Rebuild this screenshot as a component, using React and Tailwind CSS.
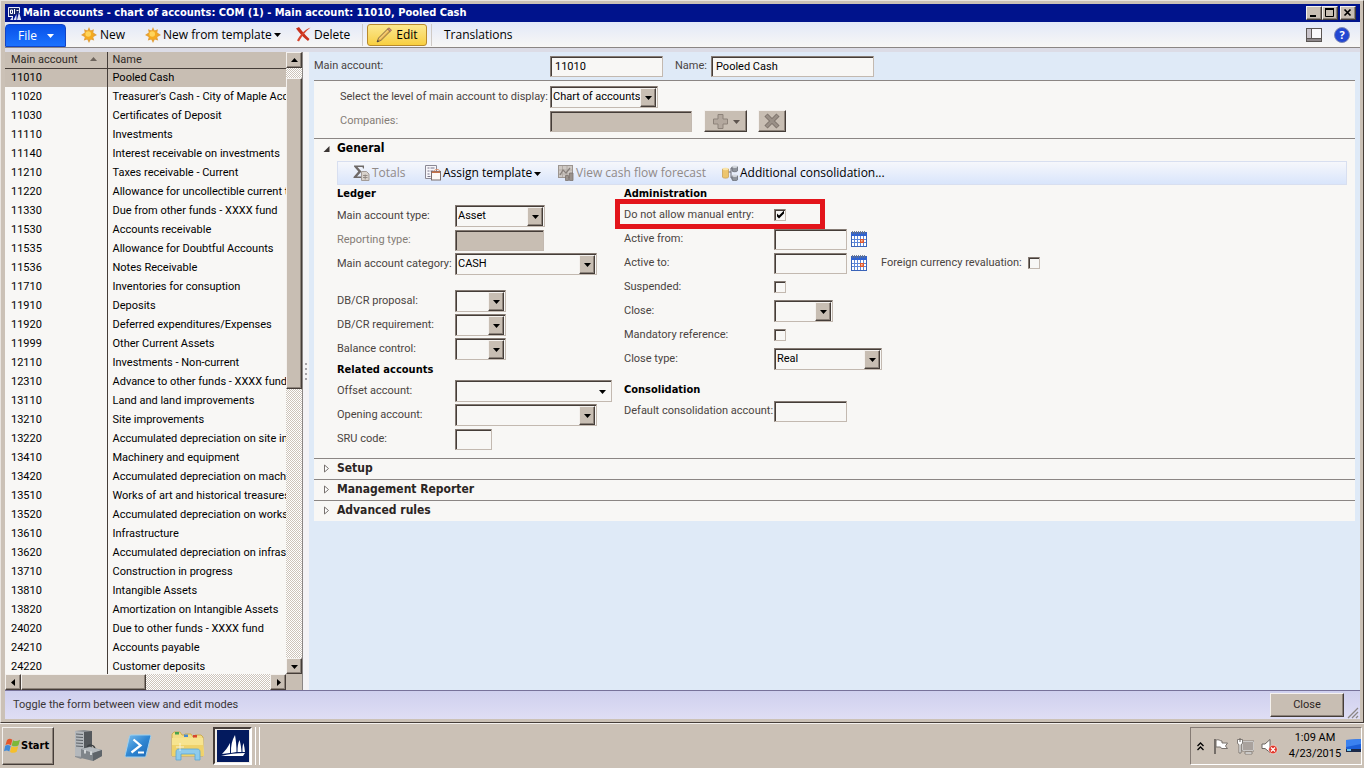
import { useState } from 'react';

const accounts = [
  ['11010', 'Pooled Cash'],
  ['11020', "Treasurer's Cash - City of Maple Acc"],
  ['11030', 'Certificates of Deposit'],
  ['11110', 'Investments'],
  ['11140', 'Interest receivable on investments'],
  ['11210', 'Taxes receivable - Current'],
  ['11220', 'Allowance for uncollectible current ta'],
  ['11330', 'Due from other funds - XXXX fund'],
  ['11530', 'Accounts receivable'],
  ['11535', 'Allowance for Doubtful Accounts'],
  ['11536', 'Notes Receivable'],
  ['11710', 'Inventories for consuption'],
  ['11910', 'Deposits'],
  ['11920', 'Deferred expenditures/Expenses'],
  ['11999', 'Other Current Assets'],
  ['12110', 'Investments - Non-current'],
  ['12310', 'Advance to other funds - XXXX fund'],
  ['13110', 'Land and land improvements'],
  ['13210', 'Site improvements'],
  ['13220', 'Accumulated depreciation on site imp'],
  ['13410', 'Machinery and equipment'],
  ['13420', 'Accumulated depreciation on machin'],
  ['13510', 'Works of art and historical treasures'],
  ['13520', 'Accumulated depreciation on works'],
  ['13610', 'Infrastructure'],
  ['13620', 'Accumulated depreciation on infrast'],
  ['13710', 'Construction in progress'],
  ['13810', 'Intangible Assets'],
  ['13820', 'Amortization on Intangible Assets'],
  ['24020', 'Due to other funds - XXXX fund'],
  ['24210', 'Accounts payable'],
  ['24220', 'Customer deposits'],
];

const raised =
  'bg-[#c8beb3] border border-t-[#f4f1ee] border-l-[#f4f1ee] border-r-[#453d38] border-b-[#453d38] shadow-[inset_-1px_-1px_0_#8d837a]';
const sunken =
  'bg-[#f8f7f5] border border-t-[#857b74] border-l-[#857b74] border-r-[#c3b9b0] border-b-[#c3b9b0] shadow-[inset_1px_1px_0_#453d38]';
const dither = 'bg-[repeating-conic-gradient(#ffffff_0_25%,#cdc4ba_0_50%)] bg-size-[2px_2px]';
const boldFont = "font-['DejaVu_Sans_Condensed','DejaVu_Sans',sans-serif] font-bold";
const barFont = "font-['Open_Sans','Noto_Sans',sans-serif] text-[12px]";

function Arrow({ dir = 'down', className = '' }) {
  const points = {
    down: '0,2 7,2 3.5,6',
    up: '0,5 7,5 3.5,1',
    left: '5,0 5,7 1,3.5',
    right: '2,0 2,7 6,3.5',
  };
  return (
    <svg width="7" height="7" viewBox="0 0 7 7" className={`shrink-0 ${className}`} aria-hidden="true">
      <polygon points={points[dir]} fill="currentColor" />
    </svg>
  );
}

function Combo({ id, width, value = '', flat = false }) {
  return (
    <div className={`relative ${width}`}>
      <select
        id={id}
        defaultValue={value}
        className={`block w-full h-[22px] pl-0.5 appearance-none outline-none text-black ${sunken}`}
      >
        <option value={value}>{value}</option>
      </select>
      <span
        className={`absolute right-0.5 top-0.5 bottom-px w-4 flex items-center justify-center pointer-events-none text-black ${flat ? '' : raised}`}
      >
        <Arrow />
      </span>
    </div>
  );
}

function TextBox({ id, width, value = '', disabled = false }) {
  return (
    <input
      id={id}
      type="text"
      defaultValue={value}
      disabled={disabled}
      className={`h-[21px] px-1 outline-none text-black ${width} ${sunken} disabled:bg-[#c8beb3]`}
    />
  );
}

function Check({ id, checked = false }) {
  return (
    <span className="relative flex">
      <input
        id={id}
        type="checkbox"
        defaultChecked={checked}
        className={`peer appearance-none w-3 h-3 ${sunken}`}
      />
      <svg
        viewBox="0 0 12 12"
        className="absolute inset-0 w-3 h-3 pointer-events-none hidden peer-checked:block"
        aria-hidden="true"
      >
        <path d="M3 4.5v3l2 2 5-5v-3l-5 5z" fill="#000" />
      </svg>
    </span>
  );
}

function Row({ label, id, labelWidth, muted, children }) {
  return (
    <div className="relative h-6 flex items-center">
      <label htmlFor={id} className={`shrink-0 whitespace-nowrap ${labelWidth} ${muted ? 'text-[#857d77]' : ''}`}>
        {label}
      </label>
      {children}
    </div>
  );
}

function LedgerRow(props) {
  return <Row labelWidth="w-[118px]" {...props} />;
}

function AdminRow(props) {
  return <Row labelWidth="w-[150px]" {...props} />;
}

function StarIcon() {
  return (
    <svg width="16" height="16" viewBox="0 0 16 16" aria-hidden="true">
      <path
        d="M8 0l1.500 3.500L13 2.200l-.800 3.300L16 8l-3.800 2 1 3.500-3.500-1L8 16l-1.700-3.500-3.500 1 1-3.500L0 8l3.800-2.500L3 2.200l3.500 1.300z"
        fill="#e3a03a"
      />
      <circle cx="8" cy="8" r="4.600" fill="#f5aa1f" />
      <circle cx="7.200" cy="7" r="2.800" fill="#ffd45a" />
    </svg>
  );
}

function DeleteIcon() {
  return (
    <svg width="15" height="15" viewBox="0 0 15 15" fill="none" aria-hidden="true">
      <path d="M0 1.500L3 0c3 4 6 8 10.500 12l-1.500 2C8 11 4 7 0 1.500z" fill="#c8301c" />
      <path d="M14.500 0.500C9 5 6 9 3 14.500L1 13.500C4 8 8 3 14.500 0.500z" fill="#d8452e" />
    </svg>
  );
}

function PencilIcon() {
  return (
    <svg width="16" height="16" viewBox="0 0 16 16" aria-hidden="true">
      <path d="M1 15l1.5-4L11.5 2l2.6 2.4L5 13.4z" fill="#e9b24a" stroke="#7d6a4a" strokeWidth="0.9" />
      <path d="M3.500 12L12.500 3" stroke="#fbe3a0" strokeWidth="0.9" />
      <path d="M11.5 2L13 .8l2.5 2.4-1.4 1.3z" fill="#d98a74" stroke="#7d5a4a" strokeWidth="0.7" />
      <path d="M1 15l.8-2 1.4 1.3z" fill="#333" />
    </svg>
  );
}

function CalendarIcon() {
  return (
    <svg width="16" height="16" viewBox="0 0 16 16" aria-hidden="true">
      <rect x="0.5" y="1.5" width="15" height="14" fill="#fff" stroke="#3a63b8" />
      <rect x="0" y="2" width="16" height="3" fill="#2f62d0" />
      <path d="M1.5 0v3M3.5 0v3M5.5 0v3M7.5 0v3M9.5 0v3M11.5 0v3M13.5 0v3" stroke="#66748c" strokeWidth="0.9" />
      <path d="M3.5 5v10M6.5 5v10M9.5 5v10M12.5 5v10M1 8.5h14M1 11.5h14" stroke="#5d86d6" strokeWidth="1" />
      <rect x="9" y="8" width="4" height="4" fill="#e0582e" />
      <rect x="10" y="9" width="1.6" height="1.6" fill="#ffc2a0" />
    </svg>
  );
}

function SumIcon() {
  return (
    <svg width="17" height="16" viewBox="0 0 17 16" aria-hidden="true">
      <path d="M1 .5h10v3h-1L9.500 2H4.500l4 4.500-4.500 5h5V13H0.500v-1l4.800-5.400L1 1.500z" fill="#6f6a68" />
      <path d="M8.500 6.500h5l2.500 2.500v6.500H8.500z" fill="#d8d2cc" stroke="#a39b96" />
      <path d="M10 10.500h4.500M10 12.500h4.500M12.200 9.500v5" stroke="#8d8580" strokeWidth="0.9" />
    </svg>
  );
}

function TemplateIcon() {
  return (
    <svg width="16" height="16" viewBox="0 0 16 16" aria-hidden="true">
      <path d="M.5.5h11v13H.5z" fill="#f7f6fa" stroke="#8a8894" />
      <path d="M2.500 3h2M2.500 6h2M2.500 9h2M5.500 3h4M5.500 6h3M2.500 11.500h3" stroke="#77758a" />
      <rect x="6.500" y="6.500" width="9" height="8.500" fill="#fdfaf6" stroke="#7b6f6c" />
      <path d="M7 6.500h8v1.500H7z" fill="#c9744a" />
      <path d="M9 6c1-2 5-2 6 0" fill="none" stroke="#d9906a" />
    </svg>
  );
}

function ForecastIcon() {
  return (
    <svg width="16" height="16" viewBox="0 0 16 16" aria-hidden="true">
      <rect x="0.500" y="0.500" width="14" height="12" fill="#cfc9c4" stroke="#9c9590" />
      <path d="M4.500 1v11M9 1v11M1 5h13M1 9h13" stroke="#b3aca6" />
      <path d="M2 10l3-5 3 3 4-5" fill="none" stroke="#88807b" strokeWidth="1.300" />
      <path d="M7.500 10.500h3v5h-3zM11.500 8h3.500v7.500h-3.500z" fill="#9a928c" stroke="#7c746f" strokeWidth="0.800" />
    </svg>
  );
}

function ConsolidationIcon() {
  return (
    <svg width="16" height="16" viewBox="0 0 16 16" aria-hidden="true">
      <path d="M6 7h3V3h2M9 7v6h2" fill="none" stroke="#6a6a72" />
      <path d="M.500 4v8c0 1.500 6 1.500 6 0V4z" fill="#edc56d" stroke="#c49a4a" strokeWidth="0.700" />
      <ellipse cx="3.500" cy="4" rx="3" ry="1.300" fill="#f9e3a8" />
      <path d="M10 1.800v4c0 1.300 5.500 1.300 5.500 0v-4z" fill="#8f949c" stroke="#5e636c" strokeWidth="0.700" />
      <ellipse cx="12.750" cy="1.800" rx="2.700" ry="1.200" fill="#d5d9df" />
      <path d="M10 10.800v4c0 1.300 5.500 1.300 5.500 0v-4z" fill="#8f949c" stroke="#5e636c" strokeWidth="0.700" />
      <ellipse cx="12.750" cy="10.800" rx="2.700" ry="1.200" fill="#d5d9df" />
    </svg>
  );
}

function TitleBar() {
  return (
    <header className="h-[18px] flex items-center bg-[#00138c] pl-[3px] pr-1 text-white">
      <svg width="13" height="13" viewBox="0 0 13 13" aria-hidden="true">
        <path d="M.500 10V.500h11V6" fill="#1b2a6b" stroke="#e8ecf8" />
        <path d="M.500 9.500H5M2.500 3v3.500h2V3zM6.500 2v5M8.500 3.500h2" fill="none" stroke="#fff" />
        <path d="M2 13l3-4v4zM5.500 13l3-6v6zM9 13l2-8 2 7v1z" fill="#dfe4f4" />
      </svg>
      <h1 className={`pl-0.5 flex-1 whitespace-nowrap ${boldFont}`}>
        Main accounts - chart of accounts: COM (1) - Main account: 11010, Pooled Cash
      </h1>
      <div className="flex text-black">
        <button aria-label="Minimize" className={`w-4 h-3.5 ${raised}`}>
          <svg viewBox="0 0 14 12" className="block" aria-hidden="true">
            <path d="M3 8h6v2H3z" />
          </svg>
        </button>
        <button aria-label="Maximize" className={`w-4 h-3.5 ${raised}`}>
          <svg viewBox="0 0 14 12" className="block" aria-hidden="true">
            <path d="M2.500 2.500h8v7h-8z" fill="none" stroke="#000" />
            <path d="M2 1h9v2H2z" />
          </svg>
        </button>
        <button aria-label="Close window" className={`ml-0.5 w-4 h-3.5 ${raised}`}>
          <svg viewBox="0 0 14 12" className="block" aria-hidden="true">
            <path d="M3.500 2.500l6 6M9.500 2.500l-6 6" stroke="#000" strokeWidth="1.700" />
          </svg>
        </button>
      </div>
    </header>
  );
}

function ActionBar() {
  return (
    <nav className={`h-[26px] flex items-center border-b border-[#8b8684] bg-linear-to-b from-[#e2e8f8] to-[#f8f7f5] text-black ${barFont}`}>
      <button className="self-end h-[23px] w-[61px] rounded-t-sm border border-[#1243c4] bg-linear-to-b from-[#0a50e8] to-[#1b72ff] text-white flex items-center pl-3">
        File
        <Arrow className="ml-2.5" />
      </button>
      <button className="ml-[15px] flex items-center gap-[3px] w-16">
        <StarIcon /> New
      </button>
      <button className="flex items-center gap-0.5 w-[151px] whitespace-nowrap">
        <StarIcon /> New from template <Arrow />
      </button>
      <button className="flex items-center gap-[3px] w-[66px]">
        <DeleteIcon /> Delete
      </button>
      <div className="h-[22px] px-1 flex items-center border-x border-[#cfcac6]">
        <button className="h-[22px] w-[60px] rounded-[3px] border border-[#b98a2c] bg-linear-to-b from-[#fbe88e] to-[#f8cf3e] flex items-center justify-center gap-1">
          <PencilIcon /> Edit
        </button>
      </div>
      <button className="ml-3">Translations</button>
      <div className="ml-auto pr-2.5 flex items-center gap-3">
        <button aria-label="Toggle view">
          <svg width="16" height="14" viewBox="0 0 16 14" className="block" aria-hidden="true">
            <rect x="0.5" y="0.5" width="15" height="13" fill="#faf9fb" stroke="#5b5654" />
            <path d="M1 1h4v9H1z" fill="#c9c4cb" />
            <path d="M1 11h14v2H1z" fill="#8d878a" />
            <path d="M5.500 1v9.500M1 10.500h14" stroke="#5b5654" />
          </svg>
        </button>
        <button
          aria-label="Help"
          className="w-4 h-4 rounded-full border border-[#8089b5] bg-[#2347d2] text-white text-[11px] leading-none font-bold"
        >
          ?
        </button>
      </div>
    </nav>
  );
}

function AccountList() {
  const [selected, setSelected] = useState('11010');
  return (
    <aside className="w-[298px] shrink-0 flex flex-col min-h-0 border-r border-[#8b8684] bg-[#f8f7f5] text-black">
      <div className="flex-1 min-h-0 flex">
        <div className="flex-1 min-w-0 overflow-hidden">
          <table className="w-full table-fixed border-collapse">
            <thead>
              <tr className="h-4 bg-[#c8beb3] border-b border-[#453d38] text-[#2f2926]">
                <th className="w-[102px] px-1.5 text-left font-normal border-r border-[#453d38]">
                  <span className="flex items-center justify-between">
                    Main account <Arrow dir="up" className="text-[#6d645d] mr-1" />
                  </span>
                </th>
                <th className="px-[5px] text-left font-normal">Name</th>
              </tr>
            </thead>
            <tbody>
              {accounts.map(([number, name]) => (
                <tr
                  key={number}
                  onClick={() => setSelected(number)}
                  className={`h-[19px] ${selected === number ? 'bg-[#c8beb3]' : ''}`}
                >
                  <td className="px-1.5 border-r border-[#453d38]">{number}</td>
                  <td className="pl-[5px] whitespace-nowrap overflow-hidden">{name}</td>
                </tr>
              ))}
            </tbody>
          </table>
        </div>
        <div className={`w-4 shrink-0 flex flex-col ${dither}`}>
          <button aria-label="Scroll up" className={`h-4 flex items-center justify-center ${raised}`}>
            <Arrow dir="up" />
          </button>
          <div className="h-2.5" />
          <div className={`h-1/2 ${raised}`} />
          <button aria-label="Scroll down" className={`mt-auto h-4 flex items-center justify-center ${raised}`}>
            <Arrow />
          </button>
        </div>
      </div>
      <div className="h-4 shrink-0 flex bg-[#c8beb3]">
        <div className={`flex-1 flex ${dither}`}>
          <button aria-label="Scroll left" className={`w-4 flex items-center justify-center ${raised}`}>
            <Arrow dir="left" />
          </button>
          <div className={`w-[125px] ${raised}`} />
          <button aria-label="Scroll right" className={`ml-auto w-4 flex items-center justify-center ${raised}`}>
            <Arrow dir="right" />
          </button>
        </div>
        <div className="w-4" />
      </div>
    </aside>
  );
}

function Splitter() {
  return (
    <div className="w-[6px] shrink-0 flex flex-col items-center justify-center gap-[3px] bg-[#f4f3f5]">
      <i className="w-0.5 h-0.5 bg-[#a5a2a6]" />
      <i className="w-0.5 h-0.5 bg-[#a5a2a6]" />
      <i className="w-0.5 h-0.5 bg-[#a5a2a6]" />
      <i className="w-0.5 h-0.5 bg-[#a5a2a6]" />
    </div>
  );
}

function FastTab({ title }) {
  return (
    <button className="w-full h-[21px] pb-0.5 flex items-center border-t border-[#8b8684] bg-[#f8f7f5] text-left">
      <svg width="23" height="9" viewBox="0 0 23 9" aria-hidden="true">
        <path d="M10.500 1v7l4-3.500z" fill="#fff" stroke="#77716e" />
      </svg>
      <span className={`text-[12px] leading-4 text-[#2b2523] ${boldFont}`}>{title}</span>
    </button>
  );
}

function GroupTitle({ children }) {
  return <h3 className={`h-[18px] leading-[17px] text-black ${boldFont}`}>{children}</h3>;
}

function LedgerGroup() {
  return (
    <div className="w-[287px] shrink-0">
      <GroupTitle>Ledger</GroupTitle>
      <div className="pt-px">
        <LedgerRow label="Main account type:" id="accountType">
          <Combo id="accountType" width="w-[90px]" value="Asset" />
        </LedgerRow>
        <LedgerRow label="Reporting type:" id="reportingType" muted>
          <TextBox id="reportingType" width="w-[89px]" disabled />
        </LedgerRow>
        <LedgerRow label="Main account category:" id="category">
          <Combo id="category" width="w-[142px]" value="CASH" />
        </LedgerRow>
      </div>
      <div className="pt-[13px]">
        <LedgerRow label="DB/CR proposal:" id="proposal">
          <Combo id="proposal" width="w-[51px]" />
        </LedgerRow>
        <LedgerRow label="DB/CR requirement:" id="requirement">
          <Combo id="requirement" width="w-[51px]" />
        </LedgerRow>
        <LedgerRow label="Balance control:" id="balance">
          <Combo id="balance" width="w-[51px]" />
        </LedgerRow>
      </div>
      <GroupTitle>Related accounts</GroupTitle>
      <LedgerRow label="Offset account:" id="offset">
        <Combo id="offset" width="w-[157px]" flat />
      </LedgerRow>
      <LedgerRow label="Opening account:" id="opening">
        <Combo id="opening" width="w-[142px]" />
      </LedgerRow>
      <LedgerRow label="SRU code:" id="sru">
        <TextBox id="sru" width="w-[37px]" />
      </LedgerRow>
    </div>
  );
}

function AdministrationGroup() {
  return (
    <div>
      <GroupTitle>Administration</GroupTitle>
      <AdminRow label="Do not allow manual entry:" id="noManual">
        <Check id="noManual" checked />
        <span className="absolute -left-[9px] -top-1 w-[210px] h-[30px] border-5 border-[#e3151b] pointer-events-none z-10" />
      </AdminRow>
      <AdminRow label="Active from:" id="activeFrom">
        <TextBox id="activeFrom" width="w-[73px]" />
        <button aria-label="Pick active from date" className="ml-1">
          <CalendarIcon />
        </button>
      </AdminRow>
      <AdminRow label="Active to:" id="activeTo">
        <TextBox id="activeTo" width="w-[73px]" />
        <button aria-label="Pick active to date" className="ml-1">
          <CalendarIcon />
        </button>
        <label htmlFor="revaluation" className="ml-3.5 w-[147px] whitespace-nowrap">
          Foreign currency revaluation:
        </label>
        <Check id="revaluation" />
      </AdminRow>
      <AdminRow label="Suspended:" id="suspended">
        <Check id="suspended" />
      </AdminRow>
      <AdminRow label="Close:" id="close">
        <Combo id="close" width="w-[59px]" />
      </AdminRow>
      <AdminRow label="Mandatory reference:" id="mandatory">
        <Check id="mandatory" />
      </AdminRow>
      <AdminRow label="Close type:" id="closeType">
        <Combo id="closeType" width="w-[108px]" value="Real" />
      </AdminRow>
      <div className="pt-2.5">
        <GroupTitle>Consolidation</GroupTitle>
        <AdminRow label="Default consolidation account:" id="consolidation">
          <TextBox id="consolidation" width="w-[73px]" />
        </AdminRow>
      </div>
    </div>
  );
}

function AccountForm() {
  return (
    <main className="flex-1 min-w-0 px-[5px] bg-[#dfeaf7]">
      <div className="h-7 flex items-center">
        <label htmlFor="mainAccount" className="w-[236px]">
          Main account:
        </label>
        <TextBox id="mainAccount" width="w-[113px]" value="11010" />
        <label htmlFor="name" className="ml-3 w-9">
          Name:
        </label>
        <TextBox id="name" width="w-[163px]" value="Pooled Cash" />
      </div>

      <section className="h-[58px] pt-1 pl-[26px] border-t border-[#8b8684] bg-[#f8f7f5]">
        <Row label="Select the level of main account to display:" id="level" labelWidth="w-[210px]">
          <Combo id="level" width="w-[108px]" value="Chart of accounts" />
        </Row>
        <Row label="Companies:" id="companies" labelWidth="w-[210px]" muted>
          <TextBox id="companies" width="w-[142px]" disabled />
          <button
            disabled
            aria-label="Add company"
            className={`ml-3 w-[43px] h-[22px] flex items-center justify-center gap-1 text-[#857b74] ${raised}`}
          >
            <svg width="17" height="17" viewBox="0 0 17 17" aria-hidden="true">
              <path
                d="M6 1.500h5V6h4.500v5H11v4.500H6V11H1.500V6H6z"
                fill="#b3a89e"
                stroke="#8d837a"
                strokeLinejoin="round"
              />
            </svg>
            <Arrow className="text-[#5d544e]" />
          </button>
          <button
            disabled
            aria-label="Remove company"
            className={`ml-[11px] w-7 h-[22px] flex items-center justify-center ${raised}`}
          >
            <svg width="16" height="16" viewBox="0 0 16 16" aria-hidden="true">
              <path d="M2 2l12 12M14 2L2 14" stroke="#7d736b" strokeWidth="4.500" />
              <path d="M2.500 2.500l11 11M13.500 2.500l-11 11" stroke="#9a9087" strokeWidth="2.500" />
            </svg>
          </button>
        </Row>
      </section>

      <section className="pb-[7px] border-t border-[#8b8684] bg-[#f8f7f5]">
        <button className="h-[18px] flex items-center">
          <svg width="23" height="9" viewBox="0 0 23 9" aria-hidden="true">
            <path d="M15.500 2v6h-6z" fill="#3a3533" />
          </svg>
          <span className={`text-[12px] leading-4 text-black ${boldFont}`}>General</span>
        </button>
        <div className="mt-1 ml-[23px] mr-2">
          <div
            className={`h-6 flex items-center pl-[15px] border border-[#d8dff0] bg-linear-to-b from-[#f6f7fb] to-[#d9e5fb] whitespace-nowrap ${barFont}`}
          >
            <button disabled className="w-[72px] flex items-center gap-0.5 text-[#908a88]">
              <SumIcon /> Totals
            </button>
            <button className="w-[133px] flex items-center gap-0.5 text-black">
              <TemplateIcon /> Assign template <Arrow />
            </button>
            <button disabled className="w-[164px] flex items-center gap-0.5 text-[#908a88]">
              <ForecastIcon /> View cash flow forecast
            </button>
            <button className="flex items-center gap-0.5 text-black">
              <ConsolidationIcon /> Additional consolidation...
            </button>
          </div>
          <div className="flex">
            <LedgerGroup />
            <AdministrationGroup />
          </div>
        </div>
      </section>

      <FastTab title="Setup" />
      <FastTab title="Management Reporter" />
      <FastTab title="Advanced rules" />
    </main>
  );
}

function StatusBar() {
  return (
    <footer className="h-[29px] shrink-0 flex items-center pl-2 border-t border-[#77729a] bg-linear-to-b from-[#cfd0ee] to-[#dfdef4]">
      <p className="flex-1 text-[#3a3536]">Toggle the form between view and edit modes</p>
      <button className={`w-[74px] h-6 text-[#2b2523] ${raised}`}>Close</button>
      <svg width="16" height="28" viewBox="0 0 16 28" aria-hidden="true">
        <path d="M4 27L14 17M8 27l6-6M12 27l2-2" stroke="#8b8684" strokeWidth="1.300" />
      </svg>
    </footer>
  );
}

function StartLogo() {
  return (
    <svg width="17" height="16" viewBox="0 0 17 16" aria-hidden="true">
      <path d="M3 2c2-1.500 3.500-1.500 5.300-.3L7 7.200C5 6 3.500 6 1.500 7z" fill="#e2572b" />
      <path d="M9 2.200c2 1.200 4.500 1.200 7-.5l-1.500 5.500c-2.500 1.500-4.500 1.500-6.800.3z" fill="#7db83a" />
      <path d="M1.200 7.800c2-1.200 3.500-1 5.500.2L5.300 13.500c-2-1.200-3.300-1.200-5.300-.2z" fill="#3f8ad8" />
      <path d="M7.500 8.300c2 1.200 4.500 1.200 6.700-.1l-1.500 5.600c-2.200 1.400-4.500 1.300-6.700.1z" fill="#f5bf2b" />
    </svg>
  );
}

function ServerIcon() {
  return (
    <svg width="30" height="32" viewBox="0 0 30 32" aria-hidden="true">
      <path d="M2 1l9-1 8 1v18L8 29l-6-2z" fill="#8b8f93" />
      <path d="M2 1l9 1v25l-9-1z" fill="#b4b8bc" />
      <path d="M11 2l8-1v17l-8 9z" fill="#54585c" />
      <path d="M3 4l7 .5M3 7l7 .5M3 10l7 .5M3 13l7 .5M3 16l7 .5" stroke="#5c6166" />
      <path d="M14 18c1-4 7-4 8 1" fill="none" stroke="#3c4043" strokeWidth="1.500" />
      <path d="M8 19l9-2 12 3v6l-9 5-12-3z" fill="#7f858a" />
      <path d="M8 19l9-2 12 3-9 3z" fill="#b5babe" />
      <path d="M20 23v8l9-5v-6z" fill="#5f656a" />
      <path d="M12 20v3.500M18 21.500V25" stroke="#eceeef" strokeWidth="1.500" />
    </svg>
  );
}

function PowerShellIcon() {
  return (
    <svg width="28" height="24" viewBox="0 0 28 24" aria-hidden="true">
      <defs>
        <linearGradient id="ps" x1="0" y1="0" x2="1" y2="1">
          <stop offset="0" stopColor="#7cc0ee" />
          <stop offset="0.5" stopColor="#2f86d2" />
          <stop offset="1" stopColor="#1b66b4" />
        </linearGradient>
      </defs>
      <path d="M7 1h18.500c1 0 1.500.8 1.200 1.800L22 21.500c-.3 1-1 1.500-2 1.500H2.500c-1 0-1.600-.8-1.300-1.800L5.500 2.300C5.700 1.500 6.200 1 7 1z" fill="url(#ps)" stroke="#9cd0f0" />
      <path d="M9.500 5.500l7 6-9 7" fill="none" stroke="#fff" strokeWidth="2.300" />
      <path d="M14 18.500h6" stroke="#fff" strokeWidth="2" />
    </svg>
  );
}

function FolderIcon() {
  return (
    <svg width="34" height="30" viewBox="0 0 34 30" aria-hidden="true">
      <path d="M1 6V3l2-2h6l2 3h2l1-1h6l2 3h1l1-2h6l2 2v19H1z" fill="#f3dd86" stroke="#c9a43c" strokeWidth="0.800" />
      <path d="M4 1h4v2.500H4z" fill="#4aa24a" />
      <path d="M13 3.500h4V6h-4z" fill="#4a8ad0" />
      <path d="M22 4h4v2.500h-4z" fill="#d8452e" />
      <path d="M1 7h31l1 18H1z" fill="#f7e48f" />
      <path d="M1 14h31l1 11H1z" fill="#efd26a" />
      <path d="M5 29V21c0-2 1-3 3-3h18c2 0 3 1 3 3v8h-5v-6H10v6z" fill="#8ecbec" stroke="#5ba4d2" strokeWidth="0.800" />
      <path d="M9 12v8M5 16h8" stroke="#fff" strokeWidth="1" opacity="0.700" />
    </svg>
  );
}

function DynamicsIcon() {
  return (
    <svg width="32" height="32" viewBox="0 0 32 32" className="block" aria-hidden="true">
      <rect width="32" height="32" fill="#031a5e" />
      <path
        d="M5 24c3-3 6-7 8-11v10zM14 23c-.3-7 1-13 4-18 1 6 1.500 11 1.500 17zM20.500 22c0-5 .5-9 2-12 1.200 4 1.800 8 2 12zM25.500 22c-.2-4 0-7 1-9 .8 3 1.200 6 1.500 9z"
        fill="#fff"
      />
      <path d="M4 26c7-2 15-3 24-3l-2 3z" fill="#fff" />
    </svg>
  );
}

function Taskbar() {
  return (
    <div className="h-[45px] shrink-0 flex items-center px-0.5 border-t border-[#f4f1ee] bg-[#cbc1b6] text-black">
      <button className={`w-[52px] h-[38px] flex items-center pl-px ${raised} ${boldFont}`}>
        <StartLogo />
        Start
      </button>
      <div className="ml-[9px] flex items-center">
        <button aria-label="Server Manager" className="w-[50px] flex justify-center">
          <ServerIcon />
        </button>
        <button aria-label="PowerShell" className="w-[50px] flex justify-center">
          <PowerShellIcon />
        </button>
        <button aria-label="Explorer" className="w-[50px] flex justify-center">
          <FolderIcon />
        </button>
      </div>
      <button
        aria-label="Dynamics AX"
        className="w-[39px] h-[38px] flex items-center justify-center border-2 border-t-[#453d38] border-l-[#453d38] border-r-white border-b-white bg-[#efebe7]"
      >
        <DynamicsIcon />
      </button>
      <i className="w-1 h-[38px] border-r border-white" />
      <i className="w-1 h-[38px] border-r border-white" />
      <div className="ml-auto h-[38px] w-[172px] flex items-center pl-1.5 border border-t-[#857b74] border-l-[#857b74] border-r-white border-b-white">
        <button aria-label="Show hidden icons">
          <svg width="7" height="9" viewBox="0 0 7 9" className="block" fill="none" stroke="#000" strokeWidth="1.300" aria-hidden="true">
            <path d="M.500 4l3-3 3 3M.500 8l3-3 3 3" />
          </svg>
        </button>
        <svg width="17" height="17" viewBox="0 0 17 17" className="ml-2" aria-hidden="true">
          <path d="M3 1v15" stroke="#6b6560" strokeWidth="1.800" />
          <path d="M4 2c3-1 4 1 6 1v2h5.500l-2 3 2 2.500H9.500L8.500 9H4z" fill="#fff" stroke="#77706b" />
        </svg>
        <svg width="17" height="17" viewBox="0 0 17 17" className="ml-2" aria-hidden="true">
          <rect x="5.500" y="3.500" width="11" height="9" fill="#a9a29d" stroke="#fff" />
          <rect x="5" y="3" width="12" height="10" fill="none" stroke="#6b6560" strokeWidth="0.700" />
          <path d="M8 14h7v2H8z" fill="#fff" stroke="#6b6560" strokeWidth="0.700" />
          <path d="M.500 1.500h5v4l-1.500 1V15H2V6.500l-1.500-1z" fill="#fff" stroke="#6b6560" strokeWidth="0.800" />
          <path d="M3 0v4" stroke="#6b6560" />
        </svg>
        <svg width="17" height="17" viewBox="0 0 17 17" className="ml-[7px]" aria-hidden="true">
          <path d="M1 6h3l5-4.500v13L4 10.500H1z" fill="#fff" stroke="#6b6560" />
          <circle cx="12" cy="11.500" r="4.300" fill="#e0392b" stroke="#fff" strokeWidth="0.500" />
          <path d="M10 9.500l4 4M14 9.500l-4 4" stroke="#fff" strokeWidth="1.300" />
        </svg>
        <time className="ml-2 w-[58px] shrink-0 text-center leading-4">
          1:09 AM
          <br />
          4/23/2015
        </time>
        <button aria-label="Show desktop" className="ml-0.5">
          <svg width="15" height="14" viewBox="0 0 15 14" className="block" aria-hidden="true">
            <path d="M0 1l15-1v11l-15 1z" fill="#1c5fd8" />
            <path d="M0 1l15-1v5L0 8z" fill="#3b82f0" />
            <path d="M0 10h15v3H0z" fill="#1b2a4a" />
            <path d="M1 10h4v2H1z" fill="#68c0f0" />
          </svg>
        </button>
      </div>
    </div>
  );
}

export default function App() {
  return (
    <div className="h-screen flex flex-col overflow-hidden bg-[#cbc1b6] font-['Roboto','Noto_Sans',sans-serif] text-[11px] leading-[14px] text-[#4a4441]">
      <div className="flex-1 min-h-0 flex flex-col p-[3px] pl-1 border border-t-[#e9e4df] border-l-[#e9e4df] border-r-[#453d38] border-b-[#453d38]">
        <TitleBar />
        <ActionBar />
        <div className="h-1 shrink-0 bg-[#dcdce6]" />
        <div className="flex-1 min-h-0 flex">
          <AccountList />
          <Splitter />
          <AccountForm />
        </div>
        <StatusBar />
      </div>
      <Taskbar />
    </div>
  );
}
